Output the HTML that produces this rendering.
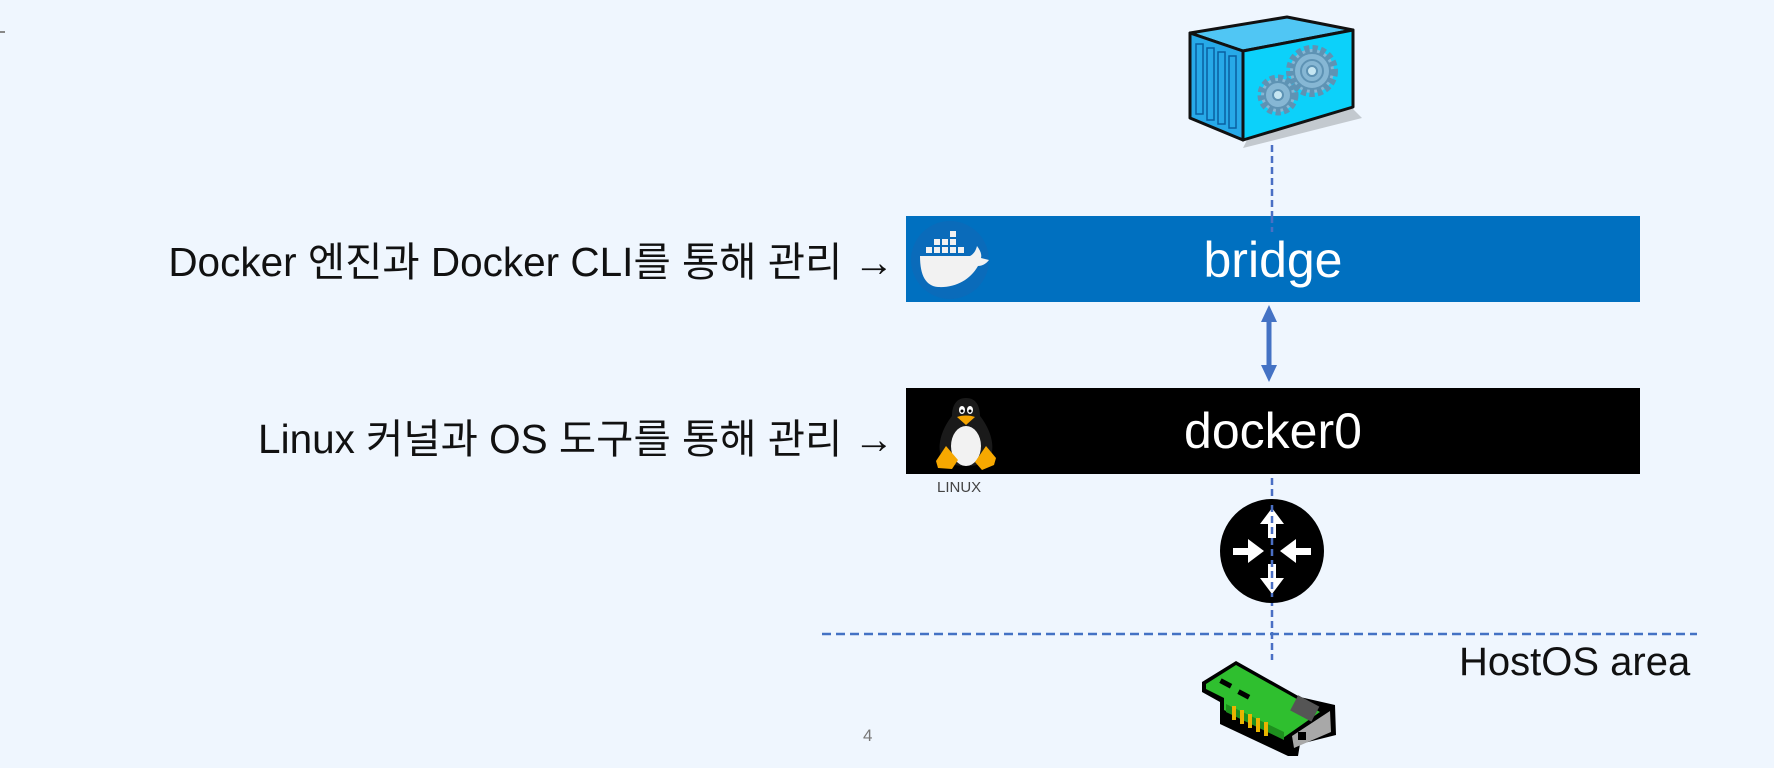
<!DOCTYPE html>
<html><head><meta charset="utf-8"><style>
html,body{margin:0;padding:0}
body{width:1774px;height:768px;background:#eff6fe;overflow:hidden;position:relative;font-family:"Liberation Sans","Noto Sans CJK KR",sans-serif}
.t{position:absolute;white-space:nowrap;color:#111}
</style></head><body>
<svg width="1774" height="768" style="position:absolute;left:0;top:0" xmlns="http://www.w3.org/2000/svg">
<line x1="0" y1="32" x2="5" y2="32" stroke="#888" stroke-width="2"/>
<!-- container -->
<polygon points="1243,148 1362,118 1352,108 1250,134" fill="#c3c9cf"/>
<polygon points="1190,33 1287,17 1353,30 1243,51" fill="#50c6f4" stroke="#111" stroke-width="3" stroke-linejoin="round"/>
<polygon points="1190,33 1243,51 1243,140 1190,118" fill="#27a9e8" stroke="#111" stroke-width="3" stroke-linejoin="round"/>
<polygon points="1243,51 1353,30 1353,107 1243,140" fill="#0cd1fa" stroke="#111" stroke-width="3" stroke-linejoin="round"/>
<g stroke="#0a5fa0" stroke-width="1.5" fill="none">
<rect x="1196" y="44" width="7" height="70"/><rect x="1207" y="48" width="7" height="72"/><rect x="1218" y="52" width="7" height="72"/><rect x="1229" y="56" width="7" height="72"/>
</g>
<g fill="#86b7d4" stroke="#5e93b4" stroke-width="2">
<circle cx="1312" cy="71" r="22" stroke-dasharray="5 3" stroke-width="8"/>
<circle cx="1312" cy="71" r="18"/>
<circle cx="1278" cy="95" r="17" stroke-dasharray="5 3" stroke-width="7"/>
<circle cx="1278" cy="95" r="13"/>
</g>
<circle cx="1312" cy="71" r="11" fill="none" stroke="#5e93b4" stroke-width="2"/>
<circle cx="1312" cy="71" r="5" fill="#c5e6f2" stroke="#5e93b4" stroke-width="2"/>
<circle cx="1278" cy="95" r="5" fill="#c5e6f2" stroke="#5e93b4" stroke-width="2"/>
<line x1="1272" y1="145" x2="1272" y2="232" stroke="#4a6fc4" stroke-width="2.5" stroke-dasharray="7 4"/>
<!-- bridge -->
<rect x="906" y="216" width="734" height="86" fill="#0070c0"/>
<line x1="1272" y1="216" x2="1272" y2="232" stroke="#4a6fc4" stroke-width="2.5" stroke-dasharray="7 4"/>
<circle cx="950" cy="260" r="39" fill="#0a6bba"/>
<g fill="#f2f2f2">
<rect x="926" y="247" width="6" height="6"/><rect x="934" y="247" width="6" height="6"/><rect x="942" y="247" width="6" height="6"/><rect x="950" y="247" width="6" height="6"/><rect x="958" y="247" width="6" height="6"/>
<rect x="934" y="239" width="6" height="6"/><rect x="942" y="239" width="6" height="6"/><rect x="950" y="239" width="6" height="6"/>
<rect x="950" y="231" width="6" height="6"/>
<path d="M920,256 L970,256 C974,254 976,250 977,246 C980,250 982,254 981,258 L989,260 C986,264 982,266 978,266 C970,280 955,288 938,287 C926,286 920,276 920,256 Z"/>
</g>
<!-- double arrow -->
<line x1="1269" y1="318" x2="1269" y2="370" stroke="#4472c4" stroke-width="5"/>
<polygon points="1269,305 1261,322 1277,322" fill="#4472c4"/>
<polygon points="1269,382 1261,365 1277,365" fill="#4472c4"/>
<!-- docker0 -->
<rect x="906" y="388" width="734" height="86" fill="#000"/>
<!-- penguin -->
<path d="M966,398 C956,398 952,406 952,416 C944,426 938,440 940,452 C942,462 952,466 966,466 C980,466 990,462 992,452 C994,440 988,426 980,416 C980,406 976,398 966,398 Z" fill="#1a1a1a"/>
<ellipse cx="966" cy="446" rx="15" ry="20" fill="#f2f2f2"/>
<ellipse cx="962" cy="410" rx="3" ry="4" fill="#fff"/><ellipse cx="970" cy="410" rx="3" ry="4" fill="#fff"/>
<circle cx="962" cy="411" r="1.5" fill="#000"/><circle cx="970" cy="411" r="1.5" fill="#000"/>
<path d="M957,417 C962,415 970,415 975,417 L966,425 Z" fill="#f5a400"/>
<path d="M936,461 L946,446 L958,460 L952,469 L938,468 Z" fill="#f7a800"/>
<path d="M996,458 L986,446 L975,462 L982,470 L994,465 Z" fill="#f7a800"/>
<line x1="1272" y1="478" x2="1272" y2="660" stroke="#4a6fc4" stroke-width="2.5" stroke-dasharray="7 4"/>
<!-- router -->
<circle cx="1272" cy="551" r="52" fill="#000"/>
<g fill="#fff">
<polygon points="1233,548 1248,548 1248,539 1264,551 1248,563 1248,555 1233,555"/>
<polygon points="1311,548 1296,548 1296,539 1280,551 1296,563 1296,555 1311,555"/>
<polygon points="1268,538 1268,524 1260,524 1272,508 1284,524 1276,524 1276,538"/>
<polygon points="1268,564 1268,578 1260,578 1272,594 1284,578 1276,578 1276,564"/>
</g>
<line x1="1272" y1="505" x2="1272" y2="597" stroke="#4a6fc4" stroke-width="2.5" stroke-dasharray="7 4"/>
<line x1="822" y1="634" x2="1697" y2="634" stroke="#4472c4" stroke-width="2.5" stroke-dasharray="9 5"/>
<!-- NIC -->
<polygon points="1202,682 1236,661 1300,697 1335,705 1336,735 1300,744 1298,756 1288,756 1220,724 1220,702 1202,692" fill="#000"/>
<polygon points="1206,684 1236,665 1320,712 1283,738 1224,710 1224,698 1206,689" fill="#2fbf2f"/>
<polygon points="1226,704 1226,712 1284,740 1284,732" fill="#1e8f1e"/>
<polygon points="1292,736 1330,711 1331,732 1294,748" fill="#a8a8a8"/>
<rect x="1293" y="700" width="24" height="17" fill="#555" transform="rotate(28 1305 708)"/>
<g fill="#e8b400"><rect x="1232" y="706" width="4" height="14"/><rect x="1240" y="710" width="4" height="14"/><rect x="1248" y="714" width="4" height="14"/><rect x="1256" y="718" width="4" height="14"/><rect x="1264" y="722" width="4" height="14"/></g>
<g fill="#000"><rect x="1220" y="681" width="12" height="5" transform="rotate(28 1226 683)"/><rect x="1238" y="692" width="12" height="5" transform="rotate(28 1244 694)"/><rect x="1298" y="732" width="8" height="8"/></g>
</svg>
<div class="t" style="right:880px;top:237px;font-size:40.5px;line-height:50px">Docker 엔진과 Docker CLI를 통해 관리 →</div>
<div class="t" style="right:880px;top:414px;font-size:40.5px;line-height:50px">Linux 커널과 OS 도구를 통해 관리 →</div>
<div class="t" style="left:906px;width:734px;text-align:center;top:230px;font-size:50px;line-height:60px;color:#fff">bridge</div>
<div class="t" style="left:906px;width:734px;text-align:center;top:401px;font-size:50px;line-height:60px;color:#fff">docker0</div>
<div class="t" style="left:937px;top:479px;font-size:15px;line-height:18px;color:#444">LINUX</div>
<div class="t" style="left:1459px;top:639px;font-size:40px;line-height:46px">HostOS area</div>
<div class="t" style="left:863px;top:726px;font-size:17px;line-height:20px;color:#777">4</div>
</body></html>
